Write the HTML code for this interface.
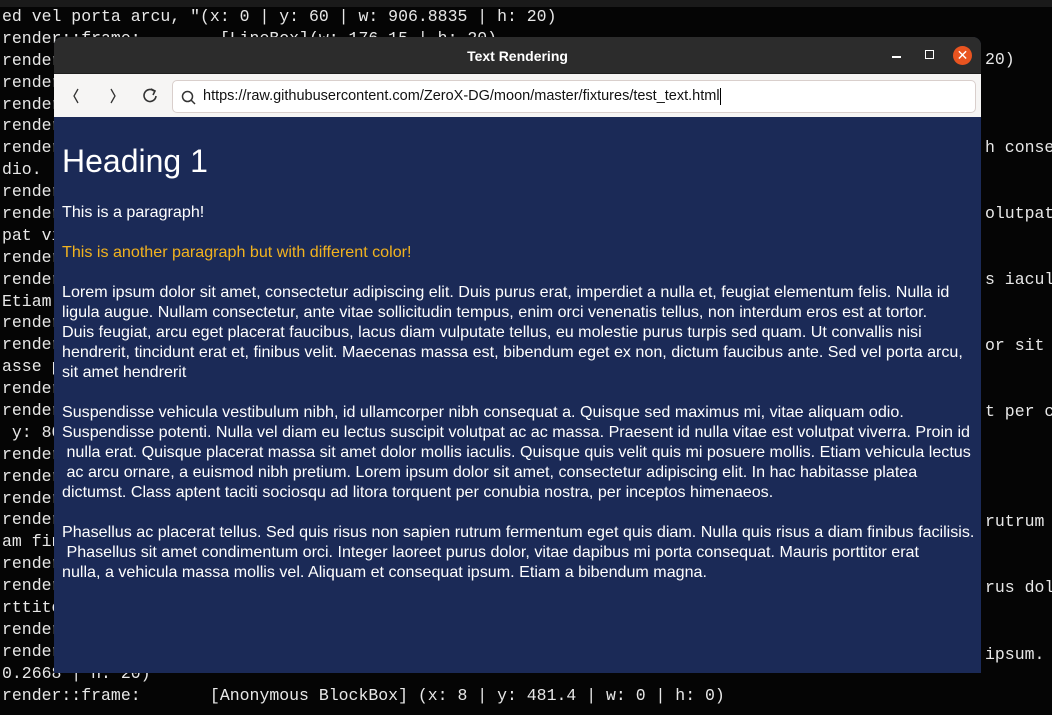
<!DOCTYPE html>
<html><head><meta charset="utf-8"><style>
*{margin:0;padding:0;box-sizing:border-box}
body{width:1052px;height:715px;overflow:hidden;background:#050505;position:relative;font-family:"Liberation Sans",sans-serif}
.term{position:absolute;left:2px;top:6px;font-family:"Liberation Mono",monospace;font-size:16.5px;color:#e8e8e8;line-height:21.9px}
.term div{height:21.9px;white-space:pre}
.rt{position:absolute;left:985px;font-family:"Liberation Mono",monospace;font-size:16.5px;color:#e8e8e8;white-space:pre}
.topbar{position:absolute;left:0;top:0;width:1052px;height:7px;background:#1a1a1a}
.win{position:absolute;left:54px;top:37px;width:927px;height:636px;background:#1b2a57;border-radius:8px 8px 0 0;overflow:hidden}
.title{height:36px;background:#2c2c2c;color:#fff;font-weight:bold;font-size:14px;text-align:center;line-height:38px;position:relative}
.tool{height:44px;background:#f6f5f4;position:relative;border-top:1px solid #1f1f1f}
.url{position:absolute;left:118px;top:6px;width:804px;height:33px;background:#fff;border:1px solid #d9cfcc;border-radius:5px;font-size:14.5px;color:#111;line-height:31px;padding-left:30px}
.content{padding:24px 0 0 8px;color:#fff;font-size:16.1px;line-height:20px}
.content h1{font-weight:normal;font-size:32px;line-height:40px;margin-bottom:21px}
.content p{margin-bottom:20px;white-space:nowrap}
</style></head><body>
<div class="topbar"></div>
<div class="term"><div>ed vel porta arcu, "(x: 0 | y: 60 | w: 906.8835 | h: 20)</div><div>render::frame:        [LineBox](w: 176.15 | h: 20)</div><div>render</div><div>render</div><div>render</div><div>render</div><div>render</div><div>dio. </div><div>render</div><div>render</div><div>pat vi</div><div>render</div><div>render</div><div>Etiam</div><div>render</div><div>render</div><div>asse p</div><div>render</div><div>render</div><div> y: 80</div><div>render</div><div>render</div><div>render</div><div>render</div><div>am fin</div><div>render</div><div>render</div><div>rttito</div><div>render</div><div>render</div><div>0.2668 | h: 20)</div><div>render::frame:       [Anonymous BlockBox] (x: 8 | y: 481.4 | w: 0 | h: 0)</div></div>
<div class="rt" style="top:50px">20)</div>
<div class="rt" style="top:138px">h conse</div>
<div class="rt" style="top:204px">olutpat</div>
<div class="rt" style="top:270px">s iacul</div>
<div class="rt" style="top:336px">or sit</div>
<div class="rt" style="top:402px">t per c</div>
<div class="rt" style="top:512px">rutrum</div>
<div class="rt" style="top:578px">rus dol</div>
<div class="rt" style="top:645px">ipsum.</div>
<div class="win">
<div class="title">Text Rendering
<span style="position:absolute;left:838px;top:19px;width:9px;height:1.5px;background:#fff"></span>
<span style="position:absolute;left:871px;top:13px;width:9px;height:9px;border:1.5px solid #fff"></span>
<span style="position:absolute;left:899px;top:9px;width:19px;height:19px;border-radius:50%;background:#e95420;color:#fff;font-size:14px;line-height:19px;font-weight:normal">✕</span>
</div>
<div class="tool">
<svg style="position:absolute;left:0;top:0" width="120" height="44"><path d="M24 15 L20 22 L24 29" stroke="#333" stroke-width="1.3" fill="none"/><path d="M57 15 L61 22 L57 29" stroke="#333" stroke-width="1.3" fill="none"/><path d="M100 17 A6 6 0 1 0 102 22" stroke="#333" stroke-width="1.6" fill="none"/><path d="M97 15 L101 17 L99 21" stroke="#333" stroke-width="1.6" fill="none"/></svg>
<div class="url"><svg style="position:absolute;left:8px;top:9px" width="16" height="16"><circle cx="6.5" cy="6.5" r="5" stroke="#333" stroke-width="1.5" fill="none"/><path d="M10 10 L14 14" stroke="#333" stroke-width="1.5"/></svg>https://raw.githubusercontent.com/ZeroX-DG/moon/master/fixtures/test_text.html<span style="display:inline-block;width:1px;height:17px;background:#000;vertical-align:middle"></span></div>
</div>
<div class="content">
<h1>Heading 1</h1>
<p>This is a paragraph!</p>
<p style="color:#f2b31f">This is another paragraph but with different color!</p>
<p>Lorem ipsum dolor sit amet, consectetur adipiscing elit. Duis purus erat, imperdiet a nulla et, feugiat elementum felis. Nulla id<br>ligula augue. Nullam consectetur, ante vitae sollicitudin tempus, enim orci venenatis tellus, non interdum eros est at tortor.<br>Duis feugiat, arcu eget placerat faucibus, lacus diam vulputate tellus, eu molestie purus turpis sed quam. Ut convallis nisi<br>hendrerit, tincidunt erat et, finibus velit. Maecenas massa est, bibendum eget ex non, dictum faucibus ante. Sed vel porta arcu,<br>sit amet hendrerit</p>
<p>Suspendisse vehicula vestibulum nibh, id ullamcorper nibh consequat a. Quisque sed maximus mi, vitae aliquam odio.<br>Suspendisse potenti. Nulla vel diam eu lectus suscipit volutpat ac ac massa. Praesent id nulla vitae est volutpat viverra. Proin id<br>&nbsp;nulla erat. Quisque placerat massa sit amet dolor mollis iaculis. Quisque quis velit quis mi posuere mollis. Etiam vehicula lectus<br>&nbsp;ac arcu ornare, a euismod nibh pretium. Lorem ipsum dolor sit amet, consectetur adipiscing elit. In hac habitasse platea<br>dictumst. Class aptent taciti sociosqu ad litora torquent per conubia nostra, per inceptos himenaeos.</p>
<p>Phasellus ac placerat tellus. Sed quis risus non sapien rutrum fermentum eget quis diam. Nulla quis risus a diam finibus facilisis.<br>&nbsp;Phasellus sit amet condimentum orci. Integer laoreet purus dolor, vitae dapibus mi porta consequat. Mauris porttitor erat<br>nulla, a vehicula massa mollis vel. Aliquam et consequat ipsum. Etiam a bibendum magna.</p>
</div>
</div>
</body></html>
